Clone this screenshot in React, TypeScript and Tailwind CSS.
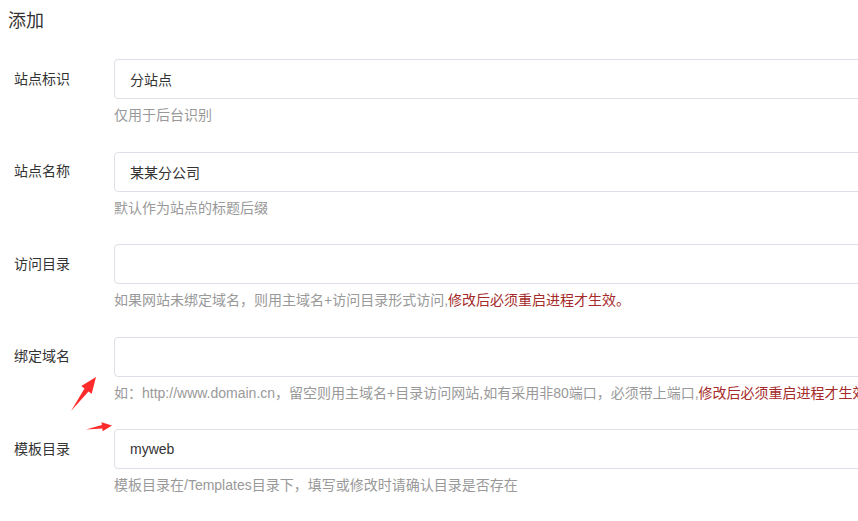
const font = { fontFamily: '"Liberation Sans", "Noto Sans CJK SC", sans-serif' };

type Row = {
  label: string;
  value: string;
  help: string;
  warn?: string;
};

const rows: Row[] = [
  { label: "站点标识", value: "分站点", help: "仅用于后台识别" },
  { label: "站点名称", value: "某某分公司", help: "默认作为站点的标题后缀" },
  {
    label: "访问目录",
    value: "",
    help: "如果网站未绑定域名，则用主域名+访问目录形式访问,",
    warn: "修改后必须重启进程才生效。",
  },
  {
    label: "绑定域名",
    value: "",
    help: "如：http://www.domain.cn，留空则用主域名+目录访问网站,如有采用非80端口，必须带上端口,",
    warn: "修改后必须重启进程才生效。",
  },
  {
    label: "模板目录",
    value: "myweb",
    help: "模板目录在/Templates目录下，填写或修改时请确认目录是否存在",
  },
];

function FormRow({ row }: { row: Row }) {
  return (
    <div className="mb-[26.5px] flex">
      <label className="flex h-[40px] w-[114px] shrink-0 items-center pl-[14px] text-[14px] text-[#333]">
        {row.label}
      </label>
      <div className="flex flex-col">
        <input
          readOnly
          value={row.value}
          className="h-[40px] w-[800px] rounded-[4px] border border-[#dcdfe6] bg-white px-[15px] text-[14px] text-[#333] outline-none"
          style={font}
        />
        <p className="mt-[6px] whitespace-nowrap text-[14px] leading-[20px] text-[#999]">
          {row.help}
          {row.warn && <span className="text-[#a52a2a]">{row.warn}</span>}
        </p>
      </div>
    </div>
  );
}

export default function App() {
  return (
    <div className="relative h-[521px] w-[858px] overflow-hidden bg-white" style={font}>
      <h2 className="pl-[8px] pt-[9px] text-[18px] leading-[24px] text-[#333]">添加</h2>
      <div className="mt-[26px]">
        {rows.map((r) => (
          <FormRow key={r.label} row={r} />
        ))}
      </div>

      {/* red annotation arrows */}
      <svg className="pointer-events-none absolute left-0 top-0" width="858" height="521">
        <polygon
          fill="#ff2b2b"
          points="71,411 88.5,391.4 91.7,393.7 96,377 81.3,386.1 84.5,388.4"
        />
        <polygon
          fill="#ff2b2b"
          points="86,429.5 102.3,428.6 102.7,431.3 112,425.5 101.5,422.3 101.9,425"
        />
      </svg>
    </div>
  );
}
